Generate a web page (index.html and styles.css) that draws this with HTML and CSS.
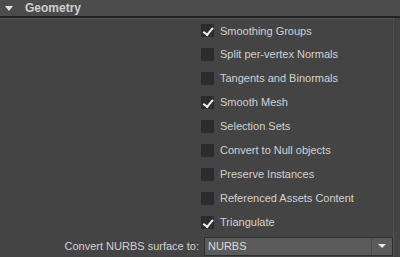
FILE: index.html
```html
<!DOCTYPE html>
<html lang="en">
<head>
  <meta charset="UTF-8">
  <meta name="viewport" content="width=device-width, initial-scale=1">
  <title>Geometry</title>
  <link rel="stylesheet" href="styles.css">
</head>
<body>
  <div class="panel">
    <div class="panel-header">
      <span class="arrow"></span>
      <span class="title">Geometry</span>
    </div>
    <div class="panel-body">
      <label class="option"><span class="box checked"></span>Smoothing Groups</label>
      <label class="option"><span class="box"></span>Split per-vertex Normals</label>
      <label class="option"><span class="box"></span>Tangents and Binormals</label>
      <label class="option"><span class="box checked"></span>Smooth Mesh</label>
      <label class="option"><span class="box"></span>Selection Sets</label>
      <label class="option"><span class="box"></span>Convert to Null objects</label>
      <label class="option"><span class="box"></span>Preserve Instances</label>
      <label class="option"><span class="box"></span>Referenced Assets Content</label>
      <label class="option"><span class="box checked"></span>Triangulate</label>

      <div class="select-row">
        <span class="select-label">Convert NURBS surface to:</span>
        <div class="select">
          <span class="select-value">NURBS</span>
          <span class="select-btn"></span>
        </div>
      </div>
    </div>
  </div>
</body>
</html>
```

FILE: styles.css
```css
body {
  margin: 0;
  background: #444444;
  font-family: 'Liberation Sans', Arial, sans-serif;
  font-size: 11px;
  color: #d2d2d2;
}

.panel {
  width: 400px;
  height: 257px;
  overflow: hidden;
}

.panel-header {
  height: 16px;
  background: #4c4c4c;
  border-bottom: 2px solid #232323;
  display: flex;
  align-items: center;
}

.arrow {
  width: 0;
  height: 0;
  margin-left: 5px;
  border-left: 4px solid transparent;
  border-right: 4px solid transparent;
  border-top: 5px solid #e0e0e0;
}

.title {
  margin-left: 12px;
  font-weight: bold;
  font-size: 12px;
  color: #cfcfcf;
}

.panel-body {
  height: 239px;
  border-top: 1px solid #555555;
  border-right: 1px solid #505050;
  width: 394px;
  box-sizing: border-box;
}

.option {
  display: flex;
  align-items: center;
  height: 24px;
  padding-left: 201px;
}

.option:first-child {
  height: 23px;
}

.box {
  width: 13px;
  height: 13px;
  background: #2c2c2c;
  margin-right: 6px;
  position: relative;
}

.box.checked::after {
  content: '';
  position: absolute;
  left: 2px;
  top: 1px;
  width: 4px;
  height: 8px;
  border-right: 2px solid #f2f2f2;
  border-bottom: 2px solid #f2f2f2;
  transform: rotate(40deg) translate(2px, -1px);
}

.select-row {
  display: flex;
  align-items: center;
  margin-top: 2px;
  height: 20px;
}

.select-label {
  width: 204px;
  text-align: right;
  padding-right: 5px;
  box-sizing: border-box;
}

.select {
  width: 189px;
  height: 19px;
  display: flex;
  background: #5b5b5b;
  border: 1px solid #2f2f2f;
  box-sizing: border-box;
}

.select-value {
  flex: 1;
  padding-left: 3px;
  line-height: 17px;
  color: #dadada;
}

.select-btn {
  width: 20px;
  border-left: 1px solid #4a4a4a;
  display: flex;
  align-items: center;
  justify-content: center;
}

.select-btn::before {
  content: '';
  border-left: 4px solid transparent;
  border-right: 4px solid transparent;
  border-top: 4px solid #e6e6e6;
}
```
